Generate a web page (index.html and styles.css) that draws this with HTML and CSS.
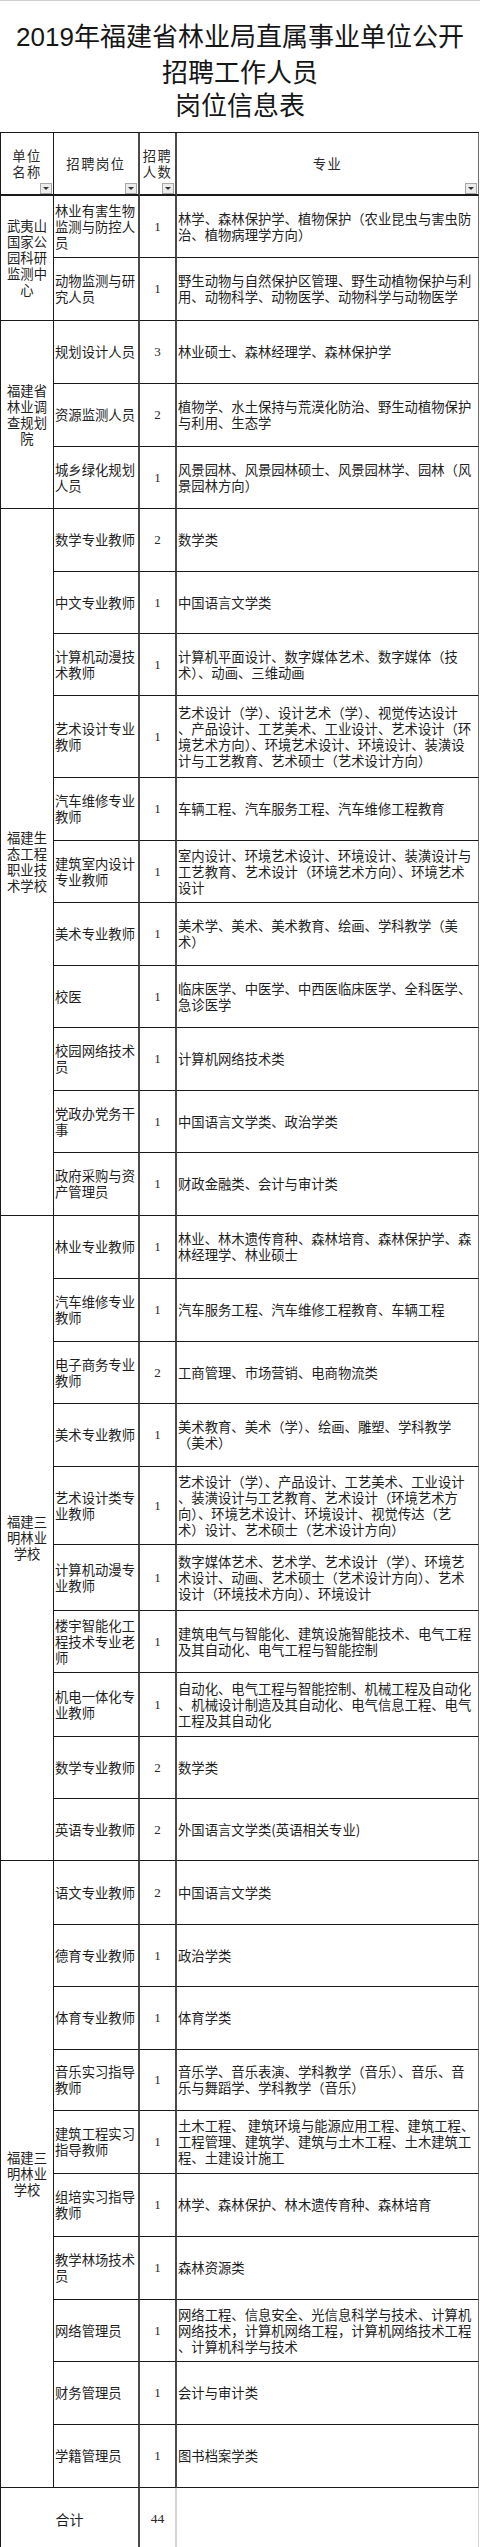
FILE: index.html
```html
<!DOCTYPE html>
<html lang="zh-CN">
<head>
<meta charset="utf-8">
<title>岗位信息表</title>
<link rel="stylesheet" href="styles.css">
</head>
<body>
<div class="page">
  <h1 class="title"><span class="year">2019</span>年福建省林业局直属事业单位公开<br>招聘工作人员<br>岗位信息表</h1>
  <div class="sheet">
    <div class="cell hd c1">单位<br>名称<span class="filter"></span></div>
    <div class="cell hd c2">招聘岗位<span class="filter"></span></div>
    <div class="cell hd c3">招聘<br>人数<span class="filter"></span></div>
    <div class="cell hd c4">专业<span class="filter"></span></div>

    <div class="cell unit span2">武夷山<br>国家公<br>园科研<br>监测中<br>心</div>
    <div class="cell post">林业有害生物<br>监测与防控人<br>员</div>
    <div class="cell num">1</div>
    <div class="cell major">林学、森林保护学、植物保护（农业昆虫与害虫防<br>治、植物病理学方向）</div>

    <div class="cell post">动物监测与研<br>究人员</div>
    <div class="cell num">1</div>
    <div class="cell major">野生动物与自然保护区管理、野生动植物保护与利<br>用、动物科学、动物医学、动物科学与动物医学</div>

    <div class="cell unit span3">福建省<br>林业调<br>查规划<br>院</div>
    <div class="cell post">规划设计人员</div>
    <div class="cell num">3</div>
    <div class="cell major">林业硕士、森林经理学、森林保护学</div>

    <div class="cell post">资源监测人员</div>
    <div class="cell num">2</div>
    <div class="cell major">植物学、水土保持与荒漠化防治、野生动植物保护<br>与利用、生态学</div>

    <div class="cell post">城乡绿化规划<br>人员</div>
    <div class="cell num">1</div>
    <div class="cell major">风景园林、风景园林硕士、风景园林学、园林（风<br>景园林方向）</div>

    <div class="cell unit span11">福建生<br>态工程<br>职业技<br>术学校</div>
    <div class="cell post">数学专业教师</div>
    <div class="cell num">2</div>
    <div class="cell major">数学类</div>

    <div class="cell post">中文专业教师</div>
    <div class="cell num">1</div>
    <div class="cell major">中国语言文学类</div>

    <div class="cell post">计算机动漫技<br>术教师</div>
    <div class="cell num">1</div>
    <div class="cell major">计算机平面设计、数字媒体艺术、数字媒体（技<br>术）、动画、三维动画</div>

    <div class="cell post">艺术设计专业<br>教师</div>
    <div class="cell num">1</div>
    <div class="cell major">艺术设计（学）、设计艺术（学）、视觉传达设计<br>、产品设计、工艺美术、工业设计、艺术设计（环<br>境艺术方向）、环境艺术设计、环境设计、装潢设<br>计与工艺教育、艺术硕士（艺术设计方向）</div>

    <div class="cell post">汽车维修专业<br>教师</div>
    <div class="cell num">1</div>
    <div class="cell major">车辆工程、汽车服务工程、汽车维修工程教育</div>

    <div class="cell post">建筑室内设计<br>专业教师</div>
    <div class="cell num">1</div>
    <div class="cell major">室内设计、环境艺术设计、环境设计、装潢设计与<br>工艺教育、艺术设计（环境艺术方向）、环境艺术<br>设计</div>

    <div class="cell post">美术专业教师</div>
    <div class="cell num">1</div>
    <div class="cell major">美术学、美术、美术教育、绘画、学科教学（美<br>术）</div>

    <div class="cell post">校医</div>
    <div class="cell num">1</div>
    <div class="cell major">临床医学、中医学、中西医临床医学、全科医学、<br>急诊医学</div>

    <div class="cell post">校园网络技术<br>员</div>
    <div class="cell num">1</div>
    <div class="cell major">计算机网络技术类</div>

    <div class="cell post">党政办党务干<br>事</div>
    <div class="cell num">1</div>
    <div class="cell major">中国语言文学类、政治学类</div>

    <div class="cell post">政府采购与资<br>产管理员</div>
    <div class="cell num">1</div>
    <div class="cell major">财政金融类、会计与审计类</div>

    <div class="cell unit span10">福建三<br>明林业<br>学校</div>
    <div class="cell post">林业专业教师</div>
    <div class="cell num">1</div>
    <div class="cell major">林业、林木遗传育种、森林培育、森林保护学、森<br>林经理学、林业硕士</div>

    <div class="cell post">汽车维修专业<br>教师</div>
    <div class="cell num">1</div>
    <div class="cell major">汽车服务工程、汽车维修工程教育、车辆工程</div>

    <div class="cell post">电子商务专业<br>教师</div>
    <div class="cell num">2</div>
    <div class="cell major">工商管理、市场营销、电商物流类</div>

    <div class="cell post">美术专业教师</div>
    <div class="cell num">1</div>
    <div class="cell major">美术教育、美术（学）、绘画、雕塑、学科教学<br>（美术）</div>

    <div class="cell post">艺术设计类专<br>业教师</div>
    <div class="cell num">1</div>
    <div class="cell major">艺术设计（学）、产品设计、工艺美术、工业设计<br>、装潢设计与工艺教育、艺术设计（环境艺术方<br>向）、环境艺术设计、环境设计、视觉传达（艺<br>术）设计、艺术硕士（艺术设计方向）</div>

    <div class="cell post">计算机动漫专<br>业教师</div>
    <div class="cell num">1</div>
    <div class="cell major">数字媒体艺术、艺术学、艺术设计（学）、环境艺<br>术设计、动画、艺术硕士（艺术设计方向）、艺术<br>设计（环境技术方向）、环境设计</div>

    <div class="cell post">楼宇智能化工<br>程技术专业老<br>师</div>
    <div class="cell num">1</div>
    <div class="cell major">建筑电气与智能化、建筑设施智能技术、电气工程<br>及其自动化、电气工程与智能控制</div>

    <div class="cell post">机电一体化专<br>业教师</div>
    <div class="cell num">1</div>
    <div class="cell major">自动化、电气工程与智能控制、机械工程及自动化<br>、机械设计制造及其自动化、电气信息工程、电气<br>工程及其自动化</div>

    <div class="cell post">数学专业教师</div>
    <div class="cell num">2</div>
    <div class="cell major">数学类</div>

    <div class="cell post">英语专业教师</div>
    <div class="cell num">2</div>
    <div class="cell major">外国语言文学类(英语相关专业)</div>

    <div class="cell unit span10">福建三<br>明林业<br>学校</div>
    <div class="cell post">语文专业教师</div>
    <div class="cell num">2</div>
    <div class="cell major">中国语言文学类</div>

    <div class="cell post">德育专业教师</div>
    <div class="cell num">1</div>
    <div class="cell major">政治学类</div>

    <div class="cell post">体育专业教师</div>
    <div class="cell num">1</div>
    <div class="cell major">体育学类</div>

    <div class="cell post">音乐实习指导<br>教师</div>
    <div class="cell num">1</div>
    <div class="cell major">音乐学、音乐表演、学科教学（音乐）、音乐、音<br>乐与舞蹈学、学科教学（音乐）</div>

    <div class="cell post">建筑工程实习<br>指导教师</div>
    <div class="cell num">1</div>
    <div class="cell major">土木工程、 建筑环境与能源应用工程、建筑工程、<br>工程管理、建筑学、建筑与土木工程、土木建筑工<br>程、土建设计施工</div>

    <div class="cell post">组培实习指导<br>教师</div>
    <div class="cell num">1</div>
    <div class="cell major">林学、森林保护、林木遗传育种、森林培育</div>

    <div class="cell post">教学林场技术<br>员</div>
    <div class="cell num">1</div>
    <div class="cell major">森林资源类</div>

    <div class="cell post">网络管理员</div>
    <div class="cell num">1</div>
    <div class="cell major">网络工程、信息安全、光信息科学与技术、计算机<br>网络技术，计算机网络工程，计算机网络技术工程<br>、计算机科学与技术</div>

    <div class="cell post">财务管理员</div>
    <div class="cell num">1</div>
    <div class="cell major">会计与审计类</div>

    <div class="cell post">学籍管理员</div>
    <div class="cell num">1</div>
    <div class="cell major">图书档案学类</div>

    <div class="cell sum-label">合计</div>
    <div class="cell num sum-num">44</div>
    <div class="cell major sum-major"></div>
  </div>
</div>
</body>
</html>
```

FILE: styles.css
```css
html, body {
  margin: 0;
  padding: 0;
  background: #ffffff;
}

body {
  font-family: "Noto Sans CJK SC", "Noto Sans CJK JP", sans-serif;
  color: #1e1e1e;
}

.page {
  width: 480px;
  border-top: 1px solid #cfcfcf;
}

.title {
  margin: 0 0 12px;
  padding-top: 17px;
  font-size: 26px;
  line-height: 33px;
  font-weight: 400;
  text-align: center;
  color: #161616;
}

.year {
  font-family: "Liberation Sans", Arial, sans-serif;
}

.sheet {
  display: grid;
  width: 478px;
  grid-template-columns: 53px 86px 37px 302px;
  grid-template-rows:
    63px
    62px 63px 63px 63px 62px
    63px 62px 62px 82px 63px 62px 63px 62px 63px 62px 63px
    63px 63px 62px 63px 78px 66px 62px 64px 62px 62px
    64px 62px 63px 61px 63px 63px 63px 62px 63px 63px
    62px;
  border-top: 1px solid #1a1a1a;
  border-left: 1px solid #1a1a1a;
  font-size: 13.33px;
  line-height: 16px;
}

.cell {
  box-sizing: border-box;
  display: flex;
  align-items: center;
  border-bottom: 1px solid #1a1a1a;
  min-width: 0;
}

.hd {
  position: relative;
  justify-content: center;
  text-align: center;
  letter-spacing: 1.5px;
  color: #2a2a2a;
  border-bottom: 2px solid #1a1a1a;
}

.c1, .unit {
  border-right: 1px solid #1a1a1a;
  justify-content: center;
  text-align: center;
}

.c2, .post {
  border-right: 2px solid #4a4a4a;
  padding-left: 1px;
  white-space: nowrap;
}

.c2 {
  justify-content: center;
  padding-left: 0;
}

.c3, .num {
  border-right: 2px solid #4a4a4a;
  justify-content: center;
}

.num {
  font-family: "Liberation Serif", "DejaVu Serif", serif;
  font-size: 13px;
  color: #2a2a2a;
}

.c4, .major {
  border-right: 1px solid #6e6e6e;
  padding-left: 1px;
  white-space: nowrap;
}

.c4 {
  justify-content: center;
  padding-left: 0;
}

.unit.span2 { grid-row: span 2; }
.unit.span3 { grid-row: span 3; }
.unit.span10 { grid-row: span 10; }
.unit.span11 { grid-row: span 11; }

.filter {
  position: absolute;
  right: 1px;
  bottom: 0;
  width: 12px;
  height: 11px;
  box-sizing: border-box;
  background: #ececec;
  border: 1px solid #a8a8a8;
  display: flex;
  align-items: center;
  justify-content: center;
}

.filter::after {
  content: "";
  width: 0;
  height: 0;
  border-left: 3px solid transparent;
  border-right: 3px solid transparent;
  border-top: 3px solid #333333;
}

.sum-label {
  grid-column: span 2;
  justify-content: center;
  border-right: 2px solid #4a4a4a;
  font-size: 14px;
}

.sum-num {
  border-right-color: #d4d4d4;
  font-size: 13.5px;
}

.sum-major {
  border-right-color: #d4d4d4;
}
```
